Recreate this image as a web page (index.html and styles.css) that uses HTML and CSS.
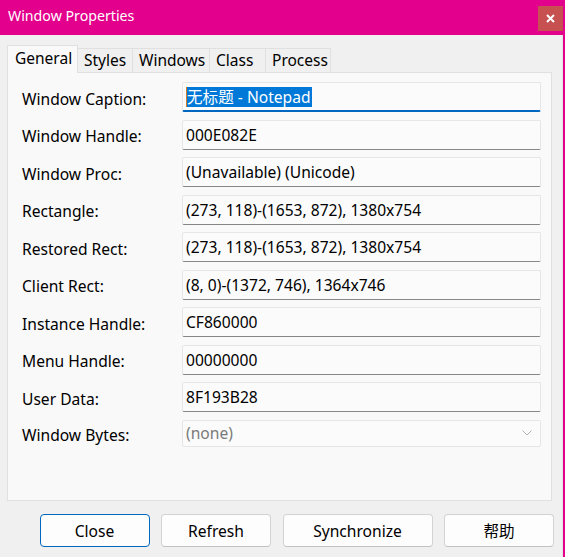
FILE: index.html
```html
<!DOCTYPE html>
<html lang="en">
<head>
<meta charset="utf-8">
<title>Window Properties</title>
<link rel="stylesheet" href="styles.css">
</head>
<body>
<div class="window">
  <div class="titlebar">
    <span class="title">Window Properties</span>
    <div class="close-btn">
      <svg width="9" height="9" viewBox="0 0 9 9"><path d="M1 1 L8 8 M8 1 L1 8" stroke="#fff" stroke-width="2" fill="none"/></svg>
    </div>
  </div>
  <div class="body">
    <div class="tabs">
      <div class="tab active t-general">General</div>
      <div class="tab t-styles">Styles</div>
      <div class="tab t-windows">Windows</div>
      <div class="tab t-class">Class</div>
      <div class="tab t-process">Process</div>
    </div>
    <div class="panel">
      <div class="row"><span class="label">Window Caption:</span><div class="field focused"><span class="caret"></span><span class="sel">无标题 - Notepad</span></div></div>
      <div class="row"><span class="label">Window Handle:</span><div class="field">000E082E</div></div>
      <div class="row"><span class="label">Window Proc:</span><div class="field">(Unavailable) (Unicode)</div></div>
      <div class="row"><span class="label">Rectangle:</span><div class="field">(273, 118)-(1653, 872), 1380x754</div></div>
      <div class="row"><span class="label">Restored Rect:</span><div class="field">(273, 118)-(1653, 872), 1380x754</div></div>
      <div class="row"><span class="label">Client Rect:</span><div class="field">(8, 0)-(1372, 746), 1364x746</div></div>
      <div class="row"><span class="label">Instance Handle:</span><div class="field">CF860000</div></div>
      <div class="row"><span class="label">Menu Handle:</span><div class="field">00000000</div></div>
      <div class="row"><span class="label">User Data:</span><div class="field">8F193B28</div></div>
      <div class="row"><span class="label">Window Bytes:</span><div class="field combo"><span>(none)</span>
        <svg class="chev" width="10" height="6" viewBox="0 0 10 6"><path d="M0.5 0.5 L5 5 L9.5 0.5" stroke="#b4b4b4" stroke-width="1" fill="none"/></svg></div></div>
    </div>
    <div class="buttons">
      <div class="btn default">Close</div>
      <div class="btn">Refresh</div>
      <div class="btn wide">Synchronize</div>
      <div class="btn">帮助</div>
    </div>
  </div>
</div>
</body>
</html>
```
FILE: styles.css
```css
* { box-sizing: border-box; }
html, body { margin: 0; padding: 0; }
body {
  width: 565px;
  height: 557px;
  overflow: hidden;
  font-family: "Noto Sans", "Noto Sans CJK SC", sans-serif;
  color: #000;
}
.window {
  width: 565px;
  height: 557px;
  background: #e3008c;
  display: flex;
  flex-direction: column;
}
.titlebar {
  height: 35px;
  display: flex;
  align-items: flex-start;
  justify-content: space-between;
  flex-shrink: 0;
}
.title {
  color: #fff;
  font-size: 14.2px;
  margin: 6px 0 0 8px;
}
.close-btn {
  width: 25px;
  height: 25px;
  margin: 6px 2px 0 0;
  background: #c75050;
  display: flex;
  align-items: center;
  justify-content: center;
}
.body {
  flex: 1;
  background: #f0f0f0;
  margin-right: 2px;
  border-right: 1px solid #e4e4e4;
  display: flex;
  flex-direction: column;
}
.tabs {
  display: flex;
  align-items: flex-end;
  height: 27px;
  margin-top: 10px;
  padding-left: 7px;
  position: relative;
  z-index: 2;
}
.tab {
  height: 24px;
  padding: 0 0 0 6px;
  font-size: 15.5px;
  line-height: 23px;
  background: #f0f0f0;
  border: 1px solid #e0e0e0;
  border-bottom: none;
  margin-left: -1px;
  white-space: nowrap;
  overflow: hidden;
}
.tab:first-child { margin-left: 0; }
.tab.active {
  height: 28px;
  margin-bottom: -1px;
  background: #f9f9f9;
  line-height: 25px;
  padding-left: 7px;
}
.t-general { width: 71px; }
.t-styles { width: 56px; }
.t-windows { width: 78px; }
.t-class { width: 57px; }
.t-process { width: 66px; }
.panel {
  height: 429px;
  margin: 0 10px 0 7px;
  background: #f9f9f9;
  border: 1px solid #e0e0e0;
  padding: 9px 10px 0 14px;
  display: flex;
  flex-direction: column;
  gap: 7.5px;
}
.row {
  display: grid;
  grid-template-columns: 160px 1fr;
  align-items: center;
}
.label {
  font-size: 15.6px;
  padding-top: 3px;
}
.field {
  height: 30px;
  background: #fbfbfb;
  border: 1px solid #e6e6e6;
  border-bottom: 1px solid #868686;
  border-radius: 2px;
  font-size: 15.6px;
  padding-left: 3px;
  display: flex;
  align-items: center;
}
.field.focused {
  border-bottom: 2px solid #0067c0;
}
.caret {
  width: 1px;
  height: 20px;
  background: #d07a2a;
}
.sel {
  background: #0078d7;
  color: #fff;
  height: 20px;
  line-height: 20px;
  display: inline-block;
  padding-right: 1px;
}
.field.combo {
  height: 27px;
  border-bottom: 1px solid #e6e6e6;
  color: #7a7a7a;
  justify-content: space-between;
  padding-right: 8px;
}
.buttons {
  display: flex;
  justify-content: flex-end;
  gap: 11.5px;
  margin-top: 13px;
  padding-right: 8px;
}
.btn {
  width: 110px;
  height: 33px;
  background: #fdfdfd;
  border: 1px solid #d3d3d3;
  border-bottom-color: #c2c2c2;
  border-radius: 4px;
  font-size: 15.6px;
  display: flex;
  align-items: center;
  justify-content: center;
}
.btn.wide { width: 150px; }
.btn.default {
  border: 1.5px solid #0067c0;
}
```
